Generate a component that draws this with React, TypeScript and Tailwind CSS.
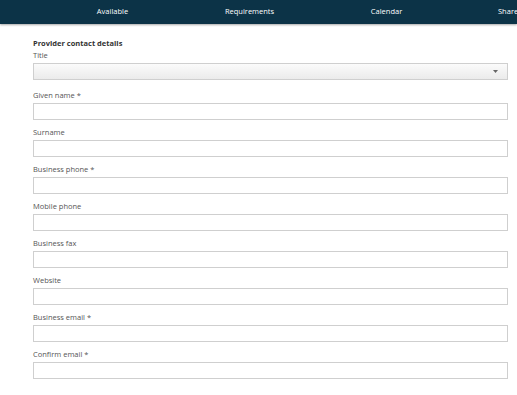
const navItems = ['Available', 'Requirements', 'Calendar'];

const fields = [
  { label: 'Given name', required: true },
  { label: 'Surname', required: false },
  { label: 'Business phone', required: true },
  { label: 'Mobile phone', required: false },
  { label: 'Business fax', required: false },
  { label: 'Website', required: false },
  { label: 'Business email', required: true },
  { label: 'Confirm email', required: true },
];

function Field({ label, required }: { label: string; required: boolean }) {
  return (
    <div className="mb-[7px]">
      <div className="mb-[3px] h-[10px] text-[7.5px] leading-[10px] text-[#555]">
        {label}
        {required ? ' *' : ''}
      </div>
      <input className="block h-[17px] w-full border border-[#cfcfcf] bg-white outline-none" />
    </div>
  );
}

export default function App() {
  return (
    <div className="h-[395px] w-[517px] overflow-hidden bg-white font-['Open_Sans',sans-serif]">
      <div className="flex h-[24px] items-center overflow-hidden whitespace-nowrap bg-[#0c3347] pl-[44px] shadow-[0_1px_2px_rgba(0,0,0,0.35)]">
        {navItems.map((item) => (
          <div key={item} className="w-[137px] shrink-0 text-center text-[7.5px] text-white">
            {item}
          </div>
        ))}
        <div className="shrink-0 pl-[43px] text-[7.5px] text-white">Share</div>
      </div>
      <div className="pl-[33px] pr-[9px] pt-[14px]">
        <div className="mb-[2px] h-[10px] text-[7.5px] font-bold leading-[10px] text-[#333]">
          Provider contact details
        </div>
        <div className="mb-[10px]">
          <div className="mb-[3px] h-[10px] text-[7.5px] leading-[10px] text-[#555]">Title</div>
          <div className="flex h-[17px] items-center justify-end border border-[#cfcfcf] bg-gradient-to-b from-[#fbfbfb] to-[#ebebeb] pr-[9px]">
            <svg width="5" height="3" viewBox="0 0 5 3">
              <path d="M0 0 L5 0 L2.5 3 Z" fill="#666" />
            </svg>
          </div>
        </div>
        {fields.map((f) => (
          <Field key={f.label} label={f.label} required={f.required} />
        ))}
      </div>
    </div>
  );
}
